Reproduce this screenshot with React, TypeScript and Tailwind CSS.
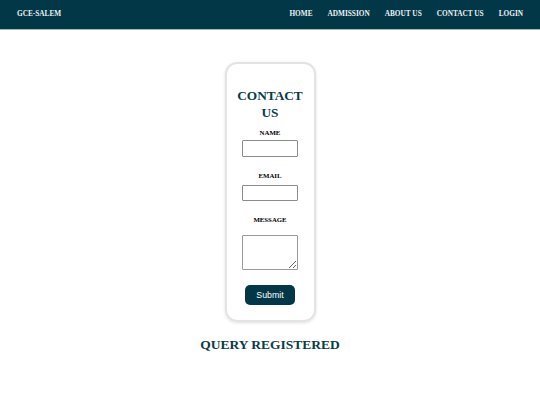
import React from "react";

const serif = { fontFamily: '"Liberation Serif", "Times New Roman", serif' };

export default function App() {
  return (
    <div className="w-[540px] min-h-[405px] bg-white" style={serif}>
      <nav className="h-[30px] bg-[#023747] border-b-[1.5px] border-[#9db8c2] flex items-center justify-between pl-[17px] pr-[17px] text-[7.3px] font-bold text-[#eef3f4]">
        <span>GCE-SALEM</span>
        <div className="flex items-center gap-[15px]">
          <span>HOME</span>
          <span>ADMISSION</span>
          <span>ABOUT US</span>
          <span>CONTACT US</span>
          <span>LOGIN</span>
        </div>
      </nav>
      <div className="flex flex-col items-center">
        <div className="mt-[32px] w-[91px] border-2 border-[#e3e3e3] rounded-[12px] shadow-[0_1px_3px_rgba(0,0,0,0.12)] flex flex-col items-center pt-[24px] pb-[15px]">
          <h1 className="text-[13.3px] leading-[16.6px] font-bold text-[#0a3b48] text-center">
            CONTACT
            <br />
            US
          </h1>
          <label className="mt-[7.5px] text-[6.8px] leading-[7.7px] font-bold text-black">NAME</label>
          <input className="mt-[4px] w-[56px] h-[16.5px] border border-[#8c8c8c] rounded-[1px] bg-white" />
          <label className="mt-[15.5px] text-[6.8px] leading-[7.7px] font-bold text-black">EMAIL</label>
          <input className="mt-[4.6px] w-[56px] h-[16.5px] border border-[#8c8c8c] rounded-[1px] bg-white" />
          <label className="mt-[14.4px] text-[6.8px] leading-[7.7px] font-bold text-black">MESSAGE</label>
          <textarea className="mt-[12px] w-[56px] h-[35px] border border-[#9a9a9a] rounded-[1px] bg-white" />
          <button
            className="mt-[15px] w-[50px] h-[20px] rounded-[5px] bg-[#023747] text-white text-[8.8px]"
            style={{ fontFamily: '"Liberation Sans", Arial, sans-serif' }}
          >
            Submit
          </button>
        </div>
        <h2 className="mt-[12.6px] text-[13.5px] font-bold text-[#0a3b48]">QUERY REGISTERED</h2>
      </div>
    </div>
  );
}
